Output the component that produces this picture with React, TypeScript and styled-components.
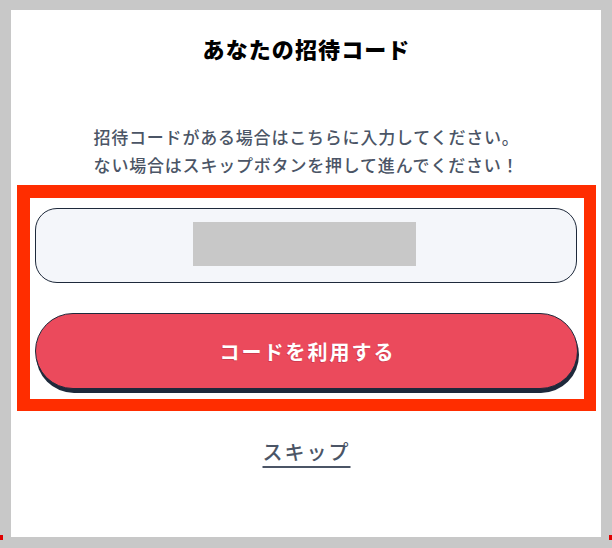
import React from "react";
import styled, { createGlobalStyle } from "styled-components";

const Global = createGlobalStyle`
  * { box-sizing: border-box; }
  html, body { margin: 0; padding: 0; background: #c8c8c8; }
  body { font-family: "Noto Sans CJK JP", "Noto Sans", sans-serif; }
`;

const Page = styled.div`
  position: relative;
  width: 612px;
  height: 548px;
  padding: 10px 11px 11px 11px;
  background: #c8c8c8;
`;

const Card = styled.div`
  height: 527px;
  background: #ffffff;
  padding: 22px 5px 0 6px;
  display: flex;
  flex-direction: column;
  align-items: center;
`;

const Title = styled.h1`
  margin: 0;
  font-size: 22px;
  line-height: 32px;
  font-weight: 900;
  letter-spacing: 1.1px;
  color: #000000;
  text-align: center;
`;

const Description = styled.p`
  margin: 59px 0 0;
  font-size: 17px;
  line-height: 28px;
  font-weight: 500;
  letter-spacing: 0.8px;
  color: #4b5566;
  text-align: center;
`;

const Highlight = styled.div`
  margin-top: 6px;
  width: 579px;
  border-style: solid;
  border-color: #ff2d00;
  border-width: 13px 12px 12px 13px;
  padding: 10px 6px 0 5px;
  display: flex;
  flex-direction: column;
  gap: 30px;
  height: 226px;
`;

const InputBox = styled.div`
  height: 75px;
  width: 542px;
  border: 1.5px solid #1e293b;
  border-radius: 22px;
  background: #f4f6fa;
  display: flex;
  align-items: center;
  justify-content: center;
  padding: 0 3px 3px 0;
`;

const Masked = styled.div`
  width: 223px;
  height: 44px;
  background: #c8c8c8;
`;

const SubmitButton = styled.button`
  width: 543px;
  height: 76px;
  border: 1.5px solid #1e293b;
  border-radius: 38px;
  background: #eb4a5c;
  box-shadow: 1px 4px 0 #1e293b;
  color: #ffffff;
  font-family: "Noto Sans CJK JP", "Noto Sans", sans-serif;
  font-size: 20px;
  font-weight: 700;
  letter-spacing: 2px;
  text-shadow: -1px 1px 0 rgba(120, 20, 40, 0.25);
  display: flex;
  align-items: center;
  justify-content: center;
  padding: 0 0 0 2px;
  cursor: pointer;
`;

const SkipLink = styled.a`
  margin-top: 27px;
  font-size: 20px;
  line-height: 28px;
  font-weight: 500;
  letter-spacing: 2px;
  color: #4b5566;
  text-decoration: underline;
  text-decoration-thickness: 2px;
  text-underline-offset: 6px;
  cursor: pointer;
`;

const Marker = styled.span<{ $side: "left" | "right" }>`
  position: absolute;
  top: 535px;
  ${(p) => (p.$side === "left" ? "left: 0;" : "right: 0;")}
  width: 3px;
  height: 5px;
  background: #e00000;
`;

export default function App() {
  return (
    <>
      <Global />
      <Page>
        <Card>
          <Title>あなたの招待コード</Title>
          <Description>
            招待コードがある場合はこちらに入力してください。
            <br />
            ない場合はスキップボタンを押して進んでください！
          </Description>
          <Highlight>
            <InputBox>
              <Masked />
            </InputBox>
            <SubmitButton type="button">コードを利用する</SubmitButton>
          </Highlight>
          <SkipLink>スキップ</SkipLink>
        </Card>
        <Marker $side="left" />
        <Marker $side="right" />
      </Page>
    </>
  );
}
